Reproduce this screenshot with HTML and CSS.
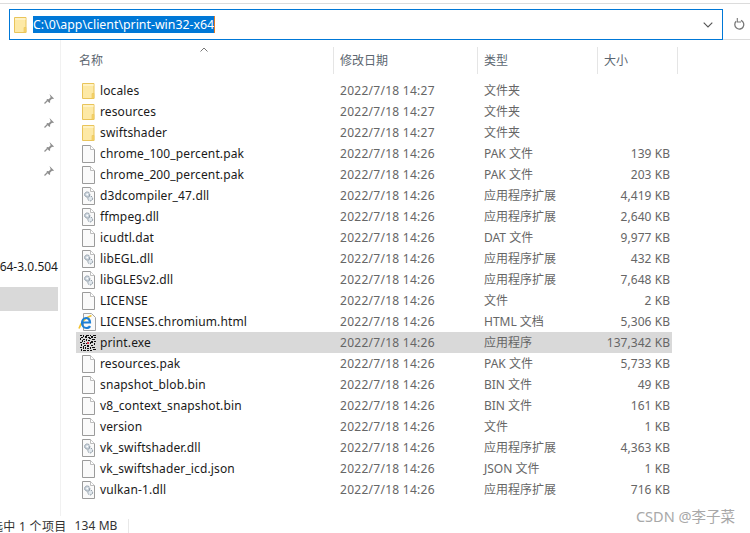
FILE: index.html
```html
<!DOCTYPE html>
<html lang="zh">
<head>
<meta charset="utf-8">
<title>print-win32-x64</title>
<link rel="stylesheet" href="styles.css">
</head>
<body>
<svg class="defs" width="0" height="0">
  <symbol id="folder" viewBox="0 0 16 18">
    <path d="M2.5 1.5h11.5v15H2.5z" fill="#fde9a6" stroke="#e9c45a"/>
    <path d="M3 2h10.5v2H3z" fill="#fff2c4"/>
    <path d="M12 11.5h2v5h-2z" fill="#f7d568" stroke="#e9c45a" stroke-width=".6"/>
  </symbol>
  <symbol id="file" viewBox="0 0 16 18">
    <path d="M2.5 .5h8l4 4v13h-12z" fill="#fafafa" stroke="#9b9b9b"/>
    <path d="M10.5 .5v4h4" fill="#fff" stroke="#bdbdbd"/>
  </symbol>
  <symbol id="dll" viewBox="0 0 16 18">
    <path d="M2.5 .5h8l4 4v13h-12z" fill="#fafafa" stroke="#9b9b9b"/>
    <path d="M10.5 .5v4h4" fill="#fff" stroke="#bdbdbd"/>
    <circle cx="7.2" cy="7.5" r="2.6" fill="#c9d3dc" stroke="#7d8a96" stroke-dasharray="1.4 .8"/>
    <circle cx="10.2" cy="11.5" r="2.4" fill="#dfe6ec" stroke="#7d8a96" stroke-dasharray="1.4 .8"/>
    <circle cx="7.2" cy="7.5" r=".9" fill="#fff"/>
  </symbol>
  <symbol id="html" viewBox="0 0 18 18">
    <path d="M5.5 .5h8l4 4v13h-12z" fill="#fafafa" stroke="#a5a5a5"/>
    <path d="M1 15.5c2-6 7-11 12.500-13" fill="none" stroke="#f2c230" stroke-width="1.600"/>
    <path d="M3.500 9.500h8.500c0-3-2-4.500-4-4.500s-4 2-4 5 2 5 4.500 5c1.500 0 3-.8 3.500-2" fill="none" stroke="#1c7fd6" stroke-width="2.200"/>
  </symbol>
  <symbol id="exe" viewBox="0 0 16 16">
    <path fill="#111" d="M0 0h2v1H0zM3 0h1v2H3zM6 0h3v1H6zM10 0h1v1h-1zM13 0h3v1h-3zM1 2h2v1H1zM5 1h2v2H5zM8 2h2v1H8zM11 1h2v2h-2zM14 2h2v1h-2zM0 3h1v2H0zM3 4h2v1H3zM6 4h1v2H6zM9 3h2v1H9zM12 4h3v1h-3zM2 5h1v2H2zM4 6h1v1H4zM8 5h2v1H8zM11 6h2v2h-2zM14 6h2v1h-2zM0 7h2v1H0zM3 8h2v1H3zM6 8h1v1H6zM10 7h1v2h-1zM14 8h1v2h-1zM1 9h1v2H1zM4 10h2v1H4zM7 10h2v2H7zM11 10h2v1h-2zM0 12h2v1H0zM3 11h1v3H3zM5 12h1v2H5zM10 12h1v2h-1zM12 12h3v1h-3zM1 14h1v2H1zM7 13h2v1H7zM13 14h3v1h-3zM3 15h3v1H3zM7 15h2v1H7zM10 15h2v1h-2z"/>
    <path fill="#d8344a" d="M7 7h2v2H7z"/>
  </symbol>
  <symbol id="pin" viewBox="0 0 12 12">
    <path d="M6.500 1l4.500 4.500-1 .6-1-.4-2 2 .2 1.600-.8.700L3.400 6.900l.8-.9 1.500.2 2-2-.4-1z" fill="#8f8f8f"/>
    <path d="M4.500 7.500L1.500 10.500" stroke="#8f8f8f" stroke-width="1.200"/>
  </symbol>
</svg>

<div class="window">
  <div class="top-rule"></div>
  <div class="address-row">
    <div class="address">
      <svg class="address-folder"><use href="#folder"/></svg>
      <span class="path">C:\0\app\client\print-win32-x64</span>
      <svg class="chevron" viewBox="0 0 10 6"><path d="M.7.7L5 5l4.300-4.300" fill="none" stroke="#555" stroke-width="1.100"/></svg>
    </div>
    <div class="refresh">
      <svg viewBox="0 0 12 14" width="12" height="14"><path d="M3.200 4.300A4.500 4.500 0 1 0 8 3.400" fill="none" stroke="#777" stroke-width="1.300"/><path d="M4.300 1v4H8" fill="none" stroke="#777" stroke-width="1.100"/></svg>
    </div>
  </div>

  <div class="main">
    <aside class="sidebar">
      <div class="side-item"><svg class="pin"><use href="#pin"/></svg></div>
      <div class="side-item"><svg class="pin"><use href="#pin"/></svg></div>
      <div class="side-item"><svg class="pin"><use href="#pin"/></svg></div>
      <div class="side-item"><svg class="pin"><use href="#pin"/></svg></div>
      <div class="side-item side-label">64-3.0.504</div>
      <div class="side-item side-selected"></div>
    </aside>

    <section class="list">
      <div class="header">
        <div class="h-name">名称<span class="sort"><svg viewBox="0 0 8 5" width="8" height="5"><path d="M.5 4.500L4 1l3.500 3.500" fill="none" stroke="#777"/></svg></span></div>
        <div class="h-date">修改日期</div>
        <div class="h-type">类型</div>
        <div class="h-size">大小</div>
      </div>

      <div class="row"><svg class="ico"><use href="#folder"/></svg><span class="name">locales</span><span class="date">2022/7/18 14:27</span><span class="type">文件夹</span><span class="size"></span></div>
      <div class="row"><svg class="ico"><use href="#folder"/></svg><span class="name">resources</span><span class="date">2022/7/18 14:27</span><span class="type">文件夹</span><span class="size"></span></div>
      <div class="row"><svg class="ico"><use href="#folder"/></svg><span class="name">swiftshader</span><span class="date">2022/7/18 14:27</span><span class="type">文件夹</span><span class="size"></span></div>
      <div class="row"><svg class="ico"><use href="#file"/></svg><span class="name">chrome_100_percent.pak</span><span class="date">2022/7/18 14:26</span><span class="type">PAK 文件</span><span class="size">139 KB</span></div>
      <div class="row"><svg class="ico"><use href="#file"/></svg><span class="name">chrome_200_percent.pak</span><span class="date">2022/7/18 14:26</span><span class="type">PAK 文件</span><span class="size">203 KB</span></div>
      <div class="row"><svg class="ico"><use href="#dll"/></svg><span class="name">d3dcompiler_47.dll</span><span class="date">2022/7/18 14:26</span><span class="type">应用程序扩展</span><span class="size">4,419 KB</span></div>
      <div class="row"><svg class="ico"><use href="#dll"/></svg><span class="name">ffmpeg.dll</span><span class="date">2022/7/18 14:26</span><span class="type">应用程序扩展</span><span class="size">2,640 KB</span></div>
      <div class="row"><svg class="ico"><use href="#file"/></svg><span class="name">icudtl.dat</span><span class="date">2022/7/18 14:26</span><span class="type">DAT 文件</span><span class="size">9,977 KB</span></div>
      <div class="row"><svg class="ico"><use href="#dll"/></svg><span class="name">libEGL.dll</span><span class="date">2022/7/18 14:26</span><span class="type">应用程序扩展</span><span class="size">432 KB</span></div>
      <div class="row"><svg class="ico"><use href="#dll"/></svg><span class="name">libGLESv2.dll</span><span class="date">2022/7/18 14:26</span><span class="type">应用程序扩展</span><span class="size">7,648 KB</span></div>
      <div class="row"><svg class="ico"><use href="#file"/></svg><span class="name">LICENSE</span><span class="date">2022/7/18 14:26</span><span class="type">文件</span><span class="size">2 KB</span></div>
      <div class="row"><svg class="ico ico-html"><use href="#html"/></svg><span class="name">LICENSES.chromium.html</span><span class="date">2022/7/18 14:26</span><span class="type">HTML 文档</span><span class="size">5,306 KB</span></div>
      <div class="row selected"><svg class="ico ico-exe"><use href="#exe"/></svg><span class="name">print.exe</span><span class="date">2022/7/18 14:26</span><span class="type">应用程序</span><span class="size">137,342 KB</span></div>
      <div class="row"><svg class="ico"><use href="#file"/></svg><span class="name">resources.pak</span><span class="date">2022/7/18 14:26</span><span class="type">PAK 文件</span><span class="size">5,733 KB</span></div>
      <div class="row"><svg class="ico"><use href="#file"/></svg><span class="name">snapshot_blob.bin</span><span class="date">2022/7/18 14:26</span><span class="type">BIN 文件</span><span class="size">49 KB</span></div>
      <div class="row"><svg class="ico"><use href="#file"/></svg><span class="name">v8_context_snapshot.bin</span><span class="date">2022/7/18 14:26</span><span class="type">BIN 文件</span><span class="size">161 KB</span></div>
      <div class="row"><svg class="ico"><use href="#file"/></svg><span class="name">version</span><span class="date">2022/7/18 14:26</span><span class="type">文件</span><span class="size">1 KB</span></div>
      <div class="row"><svg class="ico"><use href="#dll"/></svg><span class="name">vk_swiftshader.dll</span><span class="date">2022/7/18 14:26</span><span class="type">应用程序扩展</span><span class="size">4,363 KB</span></div>
      <div class="row"><svg class="ico"><use href="#file"/></svg><span class="name">vk_swiftshader_icd.json</span><span class="date">2022/7/18 14:26</span><span class="type">JSON 文件</span><span class="size">1 KB</span></div>
      <div class="row"><svg class="ico"><use href="#dll"/></svg><span class="name">vulkan-1.dll</span><span class="date">2022/7/18 14:26</span><span class="type">应用程序扩展</span><span class="size">716 KB</span></div>
    </section>
  </div>

  <footer class="status">
    <span class="status-text">选中 1 个项目</span><span class="status-size">134 MB</span>
    <span class="status-rule"></span>
    <span class="watermark">CSDN @李子菜</span>
  </footer>
</div>
</body>
</html>
```

FILE: styles.css
```css
* { box-sizing: border-box; }
html, body { margin: 0; padding: 0; background: #fff; }
body {
  width: 750px;
  height: 533px;
  overflow: hidden;
  font-family: "Noto Sans", "Noto Sans CJK SC", sans-serif;
  font-size: 12px;
  color: #1a1a1a;
}
.defs { display: block; height: 0; }
.window { width: 750px; height: 533px; display: flex; flex-direction: column; position: relative; }

.top-rule { height: 1px; margin-top: 3px; background: #dcdcdc; flex: none; }

.address-row { height: 36px; padding-top: 5px; display: flex; flex: none; }
.address {
  width: 714px;
  height: 31px;
  margin-left: 9px;
  border: 1px solid #0078d7;
  display: flex;
  align-items: center;
  padding-left: 2px;
  flex: none;
}
.address-folder { width: 16px; height: 18px; flex: none; }
.path {
  margin-left: 5px;
  background: #0078d7;
  color: #fff;
  height: 17px;
  line-height: 17px;
  font-size: 12.35px;
  border-right: 1px solid #e67a22;
}
.chevron { width: 10px; height: 6px; margin-left: auto; margin-right: 9px; flex: none; }
.refresh {
  flex: 1;
  height: 31px;
  border-bottom: 1px solid #dcdcdc;
  display: flex;
  align-items: center;
  padding-left: 10px;
}

.main { flex: 1; display: flex; min-height: 0; }

.sidebar {
  width: 61px;
  flex: none;
  padding-top: 47px;
  border-right: 1px solid #f1f1f1;
  overflow: hidden;
}
.side-item { height: 24px; width: 58px; display: flex; align-items: center; justify-content: flex-end; padding-right: 3px; }
.pin { width: 12px; height: 12px; }
.side-label {
  margin-top: 71px;
  padding-right: 0;
  white-space: nowrap;
  font-size: 12px;
}
.side-selected { margin-top: 9px; background: #d9d9d9; }

.list { flex: 1; padding: 7px 0 0 15px; min-width: 0; }

.header { height: 27px; display: flex; margin-bottom: 6px; color: #5c6670; }
.header > div { border-right: 1px solid #e5e5e5; flex: none; height: 27px; line-height: 28px; }
.h-name { width: 258px; position: relative; padding-left: 3px; }
.h-date { width: 144px; padding-left: 6px; }
.h-type { width: 120px; padding-left: 6px; }
.h-size { width: 80px; padding-left: 6px; }
.sort { position: absolute; left: 124px; top: 0; line-height: 0; }

.row { display: flex; align-items: center; height: 21px; width: 596px; white-space: nowrap; }
.ico { width: 16px; height: 18px; margin-left: 4px; margin-right: 1px; flex: none; }
.ico-html { width: 18px; margin-left: 2px; margin-right: 1px; }
.ico-exe { height: 16px; margin-left: 4px; margin-right: 1px; }
.name { margin-left: 3px; width: 240px; flex: none; letter-spacing: .13px; }
.date { width: 144px; color: #666; flex: none; letter-spacing: .27px; }
.type { width: 120px; color: #666; flex: none; margin-bottom: 2px; }
.size { flex: 1; text-align: right; color: #666; padding-right: 2px; letter-spacing: .05px; }
.selected { background: #d9d9d9; }

.status { height: 17px; flex: none; display: flex; align-items: center; color: #333; white-space: nowrap; padding-top: 2px; letter-spacing: .1px; }
.status-text { margin-left: -9px; letter-spacing: .3px; }
.status-size { margin-left: 8px; }
.status-rule { width: 1px; height: 14px; margin-left: 10px; background: #e8e8e8; }
.watermark { position: absolute; right: 15px; bottom: 9px; color: #a8a8a8; font-size: 14.5px; line-height: 16px; letter-spacing: 0; }
```
